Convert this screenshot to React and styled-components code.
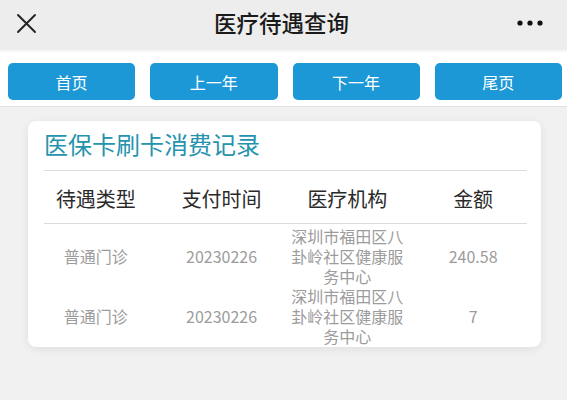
import React from 'react'
import styled, {createGlobalStyle} from 'styled-components'

const GlobalStyle = createGlobalStyle`
    html, body {
        margin: 0;
        padding: 0;
        background: #f1f1f1;
        font-family: "Noto Sans CJK SC", "Noto Sans", sans-serif;
    }
`

const records = [
    {type: '普通门诊', date: '20230226', org: '深圳市福田区八卦岭社区健康服务中心', amount: '240.58'},
    {type: '普通门诊', date: '20230226', org: '深圳市福田区八卦岭社区健康服务中心', amount: '7'},
]

export default function App() {
    return (
        <Page>
            <GlobalStyle />
            <TopBar>
                <IconBtn>
                    <svg width="21" height="21" viewBox="0 0 21 21">
                        <path d="M2 2 L19 19 M19 2 L2 19" stroke="#222" strokeWidth="1.9" strokeLinecap="round" />
                    </svg>
                </IconBtn>
                <Title>医疗待遇查询</Title>
                <IconBtn right>
                    <svg width="26" height="6" viewBox="0 0 26 6">
                        <circle cx="3" cy="3" r="2.6" fill="#111" />
                        <circle cx="13" cy="3" r="2.6" fill="#111" />
                        <circle cx="23" cy="3" r="2.6" fill="#111" />
                    </svg>
                </IconBtn>
            </TopBar>
            <NavStrip>
                {['首页', '上一年', '下一年', '尾页'].map(t => <NavButton key={t}>{t}</NavButton>)}
            </NavStrip>
            <Card>
                <CardTitle>医保卡刷卡消费记录</CardTitle>
                <Table>
                    <HeadRow>
                        <HeadCell>待遇类型</HeadCell>
                        <HeadCell>支付时间</HeadCell>
                        <HeadCell>医疗机构</HeadCell>
                        <HeadCell>金额</HeadCell>
                    </HeadRow>
                    <Divider />
                    <Body>
                        {records.map((r, i) => (
                            <Row key={i}>
                                <Cell>{r.type}</Cell>
                                <Cell>{r.date}</Cell>
                                <Cell>{r.org}</Cell>
                                <Cell>{r.amount}</Cell>
                            </Row>
                        ))}
                    </Body>
                </Table>
            </Card>
        </Page>
    )
}

const Page = styled.div`
    width: 567px;
    min-height: 400px;
    background: #f1f1f1;
`
const TopBar = styled.div`
    height: 50px;
    background: #ededed;
    display: flex;
    align-items: center;
    justify-content: space-between;
    padding: 0 24px 0 16px;
    box-sizing: border-box;
`
const IconBtn = styled.div`
    width: ${props => props.right ? '30px' : '22px'};
    display: flex;
    justify-content: ${props => props.right ? 'flex-end' : 'flex-start'};
    align-items: center;
    margin-top: -4px;
`
const Title = styled.div`
    font-size: 22.5px;
    font-weight: 500;
    color: #1a1a1a;
    margin: -6px 0 0 12px;
`
const NavStrip = styled.div`
    background: #fff;
    display: grid;
    grid-template-columns: repeat(4, 1fr);
    gap: 15px;
    padding: 11px 5px 6px 8px;
    border-top: 2px solid #f6f6f6;
    border-bottom: 1px solid #e2e2e2;
`
const NavButton = styled.div`
    height: 37px;
    background: #1b98d5;
    border-radius: 5px;
    color: #fff;
    font-size: 16px;
    display: flex;
    align-items: center;
    justify-content: center;
`
const Card = styled.div`
    margin: 14px 26px 0 28px;
    background: #fff;
    border-radius: 8px;
    box-shadow: 0 2px 10px rgba(0, 0, 0, 0.08);
    padding-bottom: 1px;
`
const CardTitle = styled.div`
    margin: 0 14px 0 16px;
    padding: 8px 0 11px;
    font-size: 24px;
    line-height: 30px;
    color: #2593ad;
    border-bottom: 1px solid #dcdcdc;
`
const Table = styled.div`
    padding: 0 5px;
`
const HeadRow = styled.div`
    display: grid;
    grid-template-columns: repeat(4, 1fr);
    height: 52px;
    align-items: center;
    padding-top: 2px;
    box-sizing: border-box;
`
const HeadCell = styled.div`
    text-align: center;
    font-size: 20px;
    color: #2a2a2a;
`
const Divider = styled.div`
    height: 1px;
    background: #dcdcdc;
    margin: 0 9px 0 11px;
`
const Body = styled.div`
    padding-top: 2px;
`
const Row = styled.div`
    display: grid;
    grid-template-columns: repeat(4, minmax(0, 1fr));
    align-items: center;
`
const Cell = styled.div`
    text-align: center;
    font-size: 16px;
    line-height: 20px;
    color: #9c9c9c;
    padding: 0 4px;
`
